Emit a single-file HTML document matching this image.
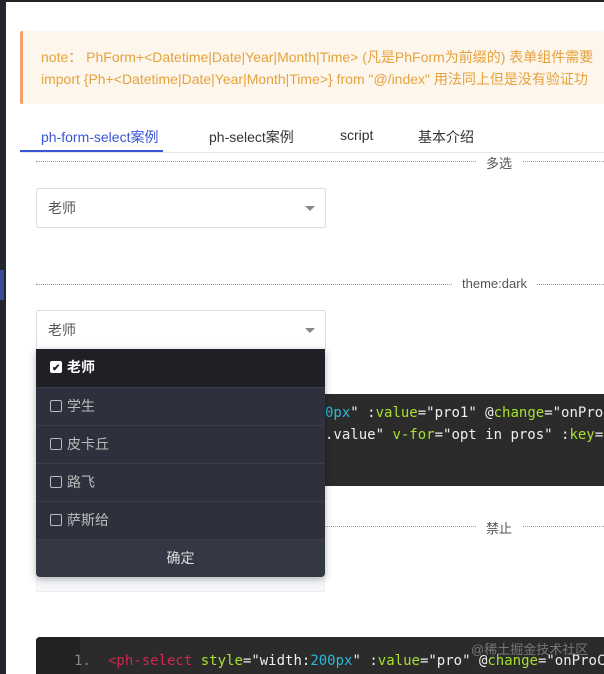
<!DOCTYPE html>
<html><head><meta charset="utf-8"><style>
body{margin:0;width:604px;height:674px;overflow:hidden;background:#fff;font-family:"Liberation Sans","Noto Sans CJK SC",sans-serif;position:relative}
.a{position:absolute}
.mono{font-family:"DejaVu Sans Mono","Noto Sans CJK SC",monospace;font-size:14px}
.sel{position:absolute;left:36px;width:277px;height:38px;border:1px solid #dcdfe6;border-radius:2px;font-size:14px;color:#555;line-height:38px;padding-left:11px;box-sizing:content-box}
.sel:after{content:"";position:absolute;right:10px;top:17px;border:5px solid transparent;border-top:5px solid #888}
.div{position:absolute;left:36px;width:568px;height:1px;border-top:1px dotted #999}
.dl{position:absolute;font-size:13px;color:#555;background:#fff;padding:0 10px}
.row{position:absolute;left:36px;width:289px;height:37px;border-top:1px solid #3a3d4a;background:#2e313d;color:#bbb;font-size:14px;line-height:37px}
.cb{display:inline-block;width:10px;height:10px;border:1px solid #bbb;border-radius:2px;margin:0 5px 0 14px;vertical-align:-1px}
</style></head><body>
<div class="a" style="left:0;top:0;width:604px;height:2px;background:#222"></div>
<div class="a" style="left:0;top:0;width:6px;height:674px;background:#25262b"></div>
<div class="a" style="left:0;top:270px;width:4px;height:30px;background:#3c4a9a"></div>
<div class="a" style="left:20px;top:31px;width:584px;height:73px;background:#fdf6ec;border-left:3px solid #f4a06a;border-radius:2px;box-sizing:border-box"></div>
<div class="a" style="left:41px;top:46px;font-size:14px;color:#e6a23c;white-space:nowrap;line-height:22px">note： PhForm+&lt;Datetime|Date|Year|Month|Time&gt; (凡是PhForm为前缀的) 表单组件需要<br>import {Ph+&lt;Datetime|Date|Year|Month|Time&gt;} from "@/index" 用法同上但是没有验证功</div>
<div class="a" style="left:20px;top:152px;width:584px;height:1px;background:#e4e7ed"></div>
<div class="a" style="left:20px;top:150px;width:143px;height:2px;background:#3a56d4"></div>
<div class="a" style="left:41px;top:127px;font-size:14px;color:#3a56d4">ph-form-select案例</div>
<div class="a" style="left:209px;top:127px;font-size:14px;color:#333">ph-select案例</div>
<div class="a" style="left:340px;top:127px;font-size:14px;color:#333">script</div>
<div class="a" style="left:418px;top:127px;font-size:14px;color:#333">基本介绍</div>
<div class="div" style="top:161px"></div><div class="dl" style="left:476px;top:153px">多选</div>
<div class="sel" style="top:188px">老师</div>
<div class="div" style="top:284px"></div><div class="dl" style="left:452px;top:276px">theme:dark</div>
<div class="sel" style="top:310px">老师</div>
<div class="a mono" style="left:325px;top:394px;width:279px;height:92px;background:#2b2b2b;color:#eee;line-height:22px;padding-top:8px;box-sizing:border-box;white-space:nowrap;overflow:hidden"><span style="color:#29b8db">0px</span>" :<span style="color:#a6e22e">value</span>="pro1" @<span style="color:#a6e22e">change</span>="onPro<br>.value" <span style="color:#a6e22e">v-for</span>="opt in pros" :<span style="color:#a6e22e">key</span>=</div>
<div class="div" style="left:325px;width:279px;top:526px"></div><div class="dl" style="left:476px;top:518px">禁止</div>
<div class="a" style="left:36px;top:540px;width:289px;height:52px;background:#f5f7fa;border:1px solid #eee;box-sizing:border-box"></div>
<div class="a" style="left:36px;top:349px;width:289px;height:228px;border-radius:0 0 4px 4px;overflow:hidden;box-shadow:0 2px 8px rgba(0,0,0,.3)">
</div>
<div class="row" style="top:349px;height:38px;border:0;background:#1f2026;color:#fff;font-weight:bold"><span class="cb" style="background:#fff;border-color:#fff;position:relative"><span style="position:absolute;left:1px;top:-12px;font-size:10px;color:#1f2026">✔</span></span>老师</div>
<div class="row" style="top:387px"><span class="cb"></span>学生</div>
<div class="row" style="top:425px"><span class="cb"></span>皮卡丘</div>
<div class="row" style="top:463px"><span class="cb"></span>路飞</div>
<div class="row" style="top:501px"><span class="cb"></span>萨斯给</div>
<div class="row" style="top:539px;text-align:center;color:#ddd;background:#343744;border-radius:0 0 4px 4px">确定</div>
<div class="a" style="left:36px;top:637px;width:568px;height:37px;background:#2b2b2b;border-radius:4px 0 0 0"></div>
<div class="a" style="left:36px;top:637px;width:44px;height:37px;background:#222;border-radius:4px 0 0 0"></div>
<div class="a mono" style="left:74px;top:653px;color:#888">1.</div>
<div class="a mono" style="left:108px;top:653px;color:#eee;white-space:nowrap"><span style="color:#d1264e">&lt;ph-select</span> <span style="color:#a6e22e">style</span>="width:<span style="color:#29b8db">200px</span>" :<span style="color:#a6e22e">value</span>="pro" @<span style="color:#a6e22e">change</span>="onProC</div>
<div class="a" style="left:471px;top:639px;font-size:13px;color:#777">@稀土掘金技术社区</div>
</body></html>
